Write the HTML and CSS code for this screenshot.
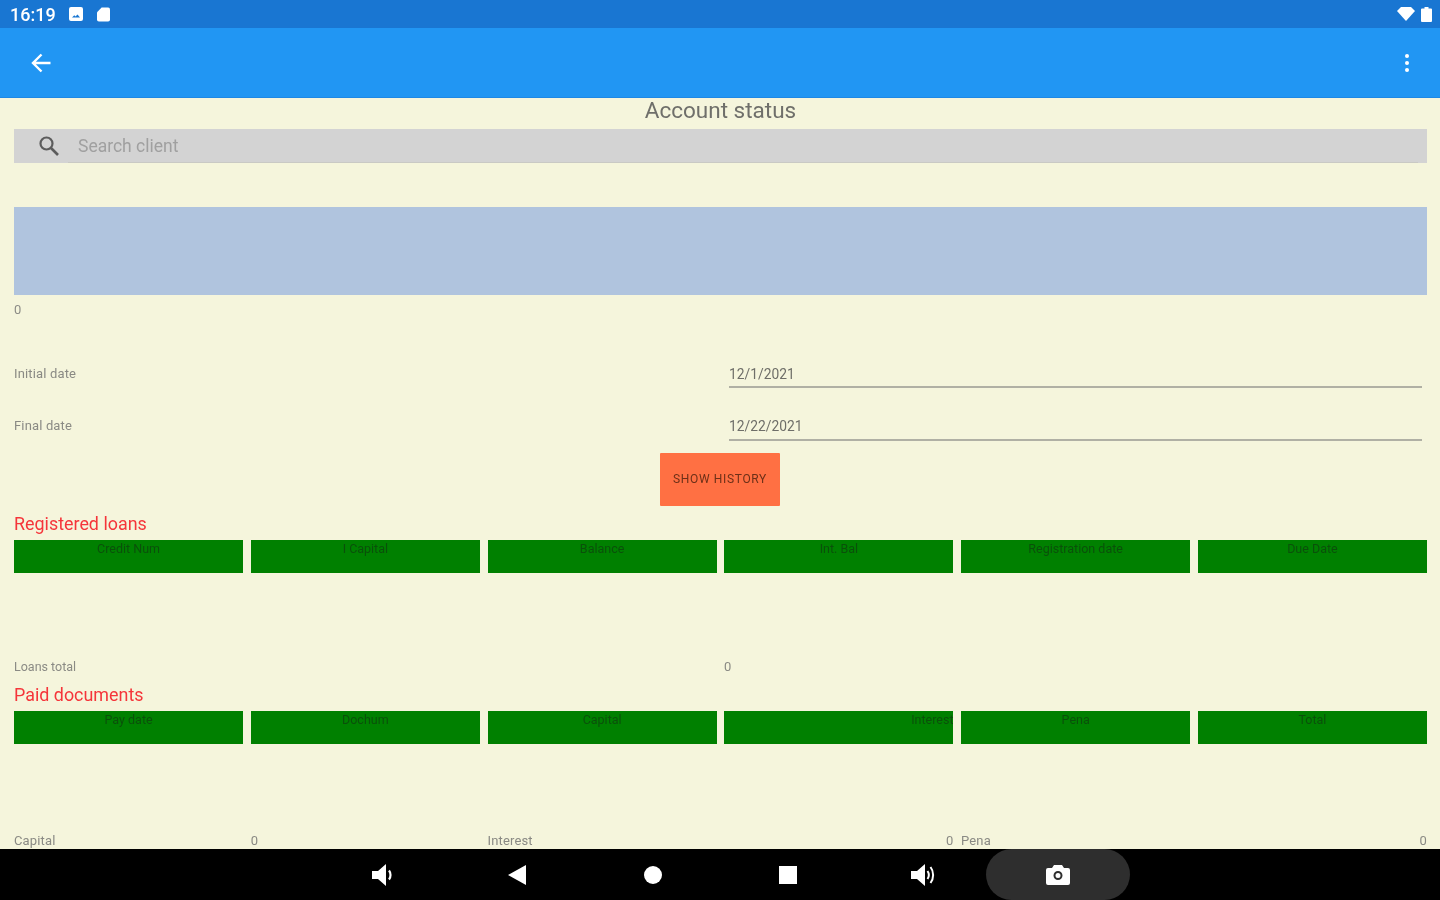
FILE: index.html
```html
<!DOCTYPE html>
<html lang="en">
<head>
<meta charset="utf-8">
<title>Account status</title>
<link rel="stylesheet" href="styles.css">
</head>
<body>
<div class="screen">
  <div class="status-bar">
    <div class="status-left">
      <span class="clock">16:19</span>
      <svg class="st-icon" viewBox="0 0 14 14"><path fill="#fff" fill-rule="evenodd" d="M2 0h10a2 2 0 0 1 2 2v10a2 2 0 0 1-2 2H2a2 2 0 0 1-2-2V2a2 2 0 0 1 2-2zM3 10.500h8L8.500 7.500 6.500 9.500 5.300 8.300z"/></svg>
      <svg class="st-icon card" viewBox="0 0 14 15"><path fill="#fff" d="M5 0h7a2 2 0 0 1 2 2v11a2 2 0 0 1-2 2H2a2 2 0 0 1-2-2V5z"/></svg>
    </div>
    <div class="status-right">
      <svg class="wifi" viewBox="0 0 18 14"><path fill="#fff" d="M0 4 4 0h10l4 4-9 10z"/></svg>
      <svg class="battery" viewBox="0 0 11 15"><path fill="#fff" d="M3.500 0h4v1.500H10a1 1 0 0 1 1 1V14a1 1 0 0 1-1 1H1a1 1 0 0 1-1-1V2.500a1 1 0 0 1 1-1h2.500z"/></svg>
    </div>
  </div>

  <header class="app-bar">
    <svg class="back" viewBox="0 0 20 20"><path fill="none" stroke="#fff" stroke-width="2.400" d="M19.500 10H2M10.500 1.500 2 10l8.500 8.500"/></svg>
    <svg class="kebab" viewBox="0 0 4 20"><circle cx="2" cy="3" r="2" fill="#fff"/><circle cx="2" cy="10" r="2" fill="#fff"/><circle cx="2" cy="17" r="2" fill="#fff"/></svg>
  </header>

  <main class="content">
    <h1 class="title">Account status</h1>
    <div class="search">
      <svg class="search-icon" viewBox="0 0 20 20"><circle cx="7.500" cy="7.500" r="6" fill="none" stroke="#5c5c5c" stroke-width="2.200"/><path d="m12 12 7 7" stroke="#5c5c5c" stroke-width="2.600"/></svg>
      <div class="search-field">Search client</div>
    </div>
    <div class="client-box"></div>
    <div class="client-id">0</div>

    <div class="date-row first">
      <span class="label">Initial date</span>
      <div class="date-field">12/1/2021</div>
    </div>
    <div class="date-row second">
      <span class="label">Final date</span>
      <div class="date-field">12/22/2021</div>
    </div>
    <div class="action"><button class="history-btn">SHOW HISTORY</button></div>

    <h2 class="section-title">Registered loans</h2>
    <div class="table-head">
      <div class="th">Credit Num</div>
      <div class="th">I Capital</div>
      <div class="th">Balance</div>
      <div class="th">Int. Bal</div>
      <div class="th">Registration date</div>
      <div class="th">Due Date</div>
    </div>
    <div class="total-row">
      <span class="label compact">Loans total</span>
      <span class="label">0</span>
    </div>

    <h2 class="section-title paid">Paid documents</h2>
    <div class="table-head">
      <div class="th">Pay date</div>
      <div class="th">Dochum</div>
      <div class="th">Capital</div>
      <div class="th end">Interest</div>
      <div class="th">Pena</div>
      <div class="th">Total</div>
    </div>
    <div class="summary-row">
      <span class="label">Capital</span>
      <span class="label">0</span>
      <span class="label">Interest</span>
      <span class="label end">0</span>
      <span class="label">Pena</span>
      <span class="label end">0</span>
    </div>
  </main>

  <nav class="nav-bar">
    <svg class="nav-icon vol-down" viewBox="0 0 20 24"><path fill="#fff" d="M0 8h6l8-7v22l-8-7H0z"/><path fill="none" stroke="#fff" stroke-width="2.200" d="M17 7.500c2 2.500 2 6.500 0 9"/></svg>
    <svg class="nav-icon back-nav" viewBox="0 0 18 20"><path fill="#fff" d="M18 0v20L0 10z"/></svg>
    <span class="home-dot"></span>
    <span class="recent"></span>
    <svg class="nav-icon vol-up" viewBox="0 0 24 24"><path fill="#fff" d="M0 8h6l8-7v22l-8-7H0z"/><path fill="none" stroke="#fff" stroke-width="2" d="M16.500 8c1.700 2.500 1.700 5.500 0 8M19.500 4c3.500 4.500 3.500 11.500 0 16"/></svg>
    <div class="shot-pill">
      <svg class="camera" viewBox="0 0 24 20"><path fill="#fff" fill-rule="evenodd" d="M8 0h8l2 3h4a2 2 0 0 1 2 2v13a2 2 0 0 1-2 2H2a2 2 0 0 1-2-2V5a2 2 0 0 1 2-2h4zM12 6a4.500 4.500 0 1 0 0 9 4.500 4.500 0 0 0 0-9zM12 8a2.500 2.500 0 1 1 0 5 2.500 2.500 0 0 1 0-5z"/></svg>
    </div>
  </nav>
</div>
</body>
</html>
```

FILE: styles.css
```css
* { box-sizing: border-box; }
html, body { margin: 0; padding: 0; background: #f5f5dc; }
body { font-family: Roboto, "Liberation Sans", sans-serif; overflow: hidden; }

.screen {
  width: 1440px;
  height: 900px;
  display: flex;
  flex-direction: column;
  overflow: hidden;
  filter: blur(0.7px);
}

.status-bar {
  height: 28px;
  flex: none;
  background: #1976d2;
  display: flex;
  align-items: center;
  justify-content: space-between;
  padding: 0 8px 0 10px;
  color: #fff;
}
.status-left, .status-right { display: flex; align-items: center; }
.clock { font-size: 18px; font-weight: 500; width: 59px; }
.st-icon { width: 14px; height: 14px; display: block; }
.st-icon.card { width: 13px; height: 15px; margin-left: 14px; }
.wifi { width: 18px; height: 14px; display: block; }
.battery { width: 11px; height: 15px; display: block; margin-left: 6px; }

.app-bar {
  height: 70px;
  flex: none;
  background: #2196f3;
  border-bottom: 1px solid #1e88e5;
  display: flex;
  align-items: center;
  justify-content: space-between;
  padding: 0 31px;
}
.back { width: 20px; height: 20px; display: block; }
.kebab { width: 4px; height: 20px; display: block; }

.content {
  flex: 1;
  min-height: 0;
  overflow: hidden;
  padding: 0 13px 0 14px;
  background: #f5f5dc;
}

.title {
  margin: 0;
  height: 31px;
  font-size: 22.500px;
  line-height: 25px;
  font-weight: 400;
  text-align: center;
  color: #6f6f6a;
}

.search {
  height: 34px;
  background: #d3d3d3;
  display: flex;
  align-items: center;
}
.search-icon { width: 20px; height: 20px; display: block; margin-left: 25px; flex: none; }
.search-field {
  flex: 1;
  height: 34px;
  margin: 0 9px 0 9px;
  padding-left: 10px;
  border-bottom: 1px solid #c9c9c4;
  font-size: 17.500px;
  line-height: 34px;
  color: #a0a0a0;
}

.client-box { height: 88px; margin-top: 44px; background: #b0c4de; }
.client-id { height: 30px; font-size: 13px; line-height: 30px; color: #8c8c86; }

.label { font-size: 13px; letter-spacing: 0.15px; line-height: 18px; color: #8a8a84; }
.label.compact { font-size: 12.500px; letter-spacing: 0; }
.label.end { text-align: right; }

.date-row {
  height: 52px;
  display: grid;
  grid-template-columns: 715px 1fr;
  align-items: end;
}
.date-row.first { margin-top: 11px; }
.date-row.second { height: 53px; }
.date-row .label { padding-bottom: 5px; }
.date-row.second .label { padding-bottom: 6px; }
.date-field {
  margin-right: 5px;
  height: 26px;
  border-bottom: 2px solid #b0b0a4;
  font-size: 13.800px;
  line-height: 25px;
  color: #6e6e68;
}
.date-row.second .date-field { line-height: 23px; }

.action { display: flex; justify-content: center; margin-top: 12px; padding-right: 1px; }
.history-btn {
  width: 120px;
  height: 53px;
  padding: 0 0 2px;
  border: 0;
  border-radius: 1px;
  background: #ff7043;
  font-family: inherit;
  font-size: 12px;
  letter-spacing: 0.65px;
  color: #6d3018;
}

.section-title {
  margin: 0;
  height: 34px;
  padding-top: 8px;
  font-size: 17.900px;
  line-height: 20px;
  font-weight: 400;
  color: #f5353a;
}
.section-title.paid { height: 35px; padding-top: 9px; }

.table-head {
  height: 33px;
  display: grid;
  grid-template-columns: repeat(6, 1fr);
  column-gap: 7.600px;
}
.th {
  background: #008000;
  font-size: 12.500px;
  line-height: 17px;
  text-align: center;
  color: #0a500a;
  white-space: nowrap;
  overflow: hidden;
}
.th.end { text-align: right; }

.total-row {
  margin-top: 85px;
  height: 18px;
  display: grid;
  grid-template-columns: 710px 1fr;
}

.summary-row {
  margin-top: 88px;
  height: 18px;
  display: grid;
  grid-template-columns: repeat(6, 1fr);
  column-gap: 7.600px;
}

.nav-bar {
  height: 51px;
  flex: none;
  background: #000;
  display: flex;
  align-items: center;
  padding-left: 372px;
}
.nav-icon { display: block; flex: none; }
.vol-down { width: 20px; height: 24px; }
.back-nav { width: 18px; height: 20px; margin-left: 116px; }
.home-dot { width: 18px; height: 18px; border-radius: 50%; background: #fff; margin-left: 118px; flex: none; }
.recent { width: 18px; height: 18px; background: #fff; margin-left: 117px; flex: none; }
.vol-up { width: 24px; height: 24px; margin-left: 114px; }
.shot-pill {
  width: 144px;
  height: 51px;
  margin-left: 51px;
  border-radius: 26px;
  background: #2e2e2e;
  display: flex;
  align-items: center;
  justify-content: center;
  flex: none;
}
.camera { width: 24px; height: 20px; display: block; }
```
